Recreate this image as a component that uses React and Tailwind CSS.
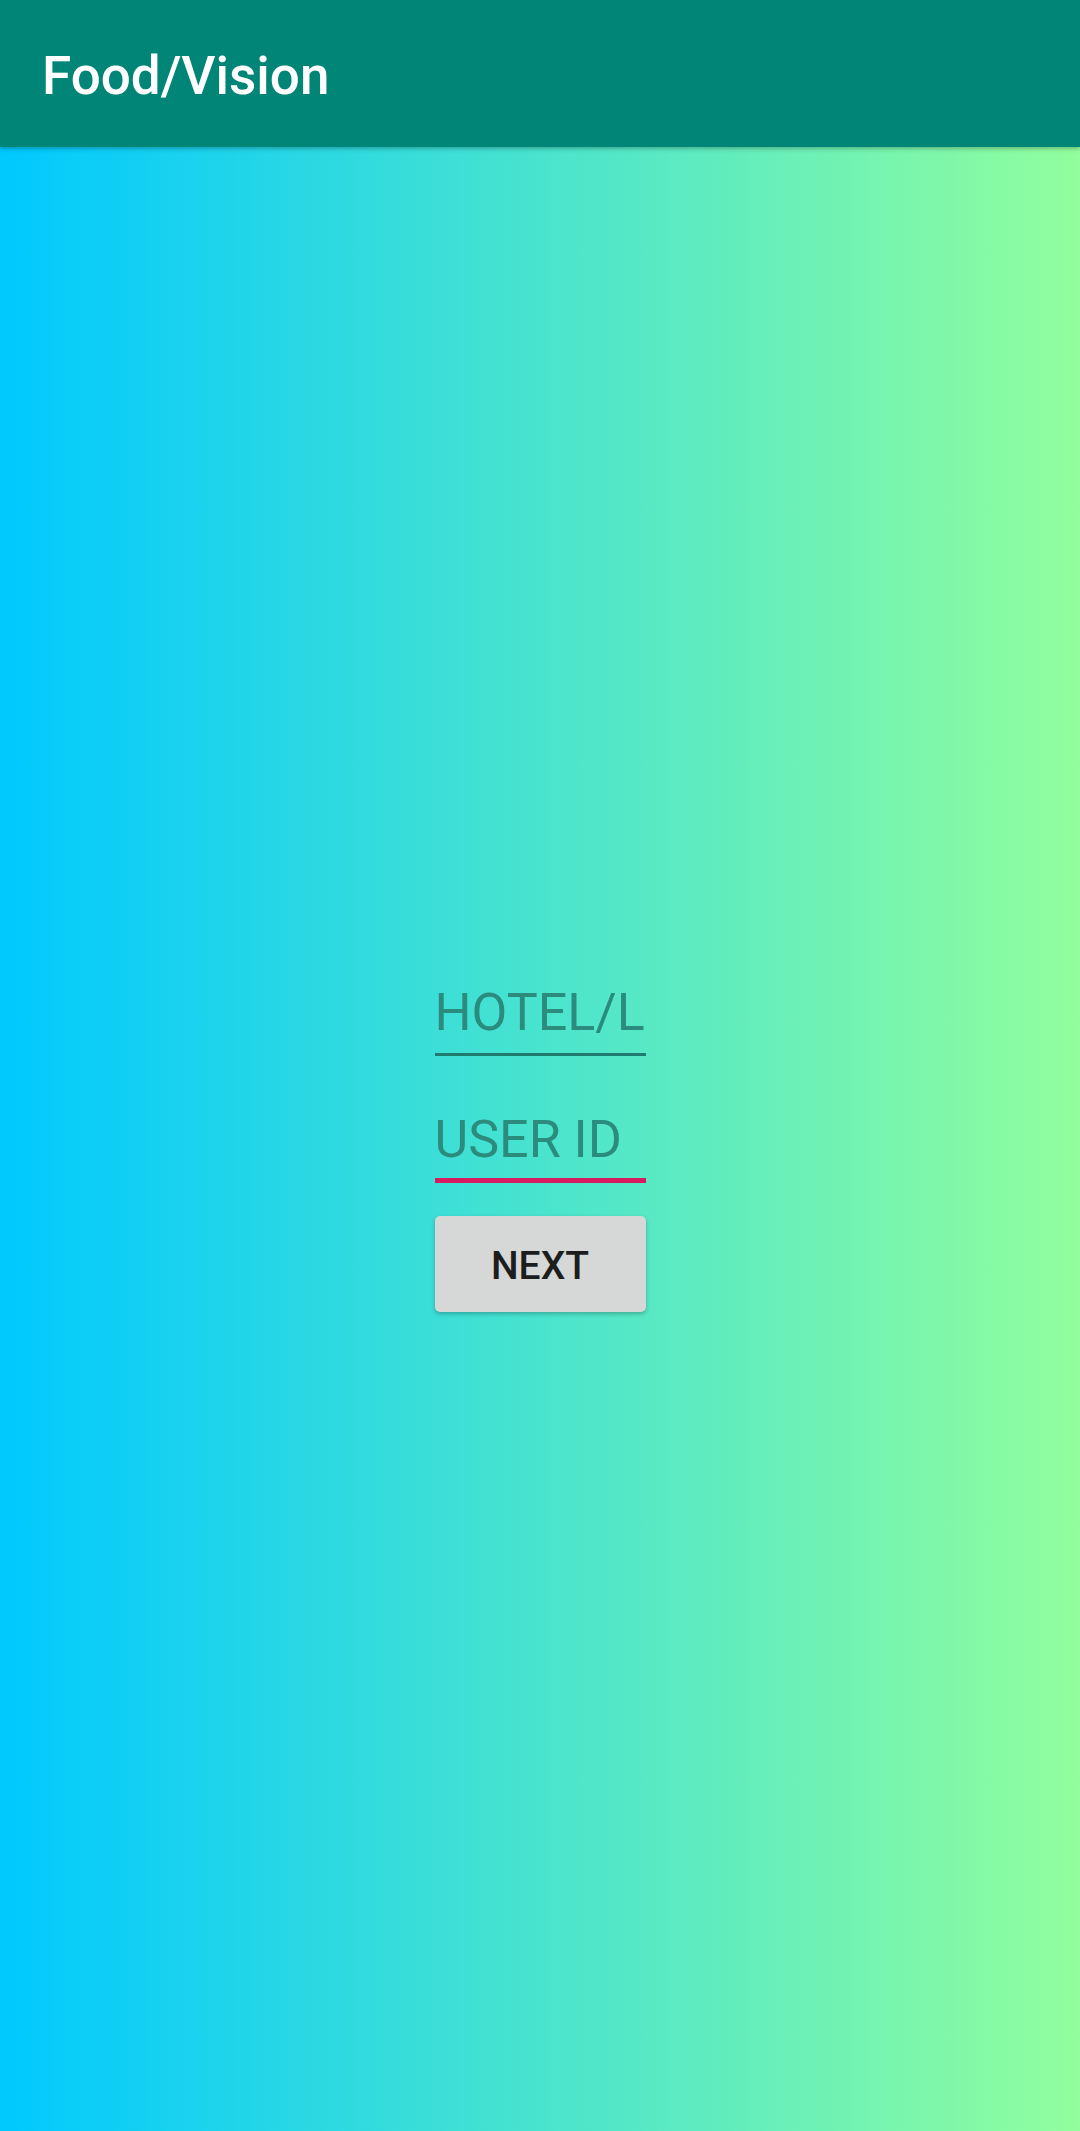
export default function App() {
  return (
    <div
      className="w-[1080px] h-[2131px] flex flex-col overflow-hidden"
      style={{ fontFamily: "Roboto, 'Liberation Sans', sans-serif" }}
    >
      {/* App bar */}
      <header className="relative z-10 h-[147px] shrink-0 bg-[#008577] flex items-center pl-[42px] pt-[6px] shadow-[0_2px_4px_rgba(0,0,0,0.25)]">
        <h1 className="text-[53px] font-medium text-white leading-none">Food/Vision</h1>
      </header>

      {/* Body */}
      <main className="flex-1 bg-linear-to-r/srgb from-[#00c9ff] to-[#92fe9d] flex flex-col items-center pt-[834px]">
        <div className="w-[211px] flex flex-col">
          <div className="h-[63px] leading-[63px] text-[52px] text-[#2b8c7e] whitespace-nowrap">
            HOTEL/L
          </div>
          <div className="mt-[9px] h-[3px] bg-[#1f7a70]" />

          <div className="mt-[52px] h-[63px] leading-[63px] text-[52px] text-[#2b8c7e] whitespace-nowrap">
            USER ID
          </div>
          <div className="mt-[7px] h-[5px] bg-[#d81b60]" />

          <button className="mt-[33px] h-[96px] pt-[4px] rounded-[5px] bg-[#d6d7d7] text-[39px] font-medium text-[#1d1d1d] shadow-[0_2px_4px_rgba(0,0,0,0.25)]">
            NEXT
          </button>
        </div>
      </main>
    </div>
  );
}
